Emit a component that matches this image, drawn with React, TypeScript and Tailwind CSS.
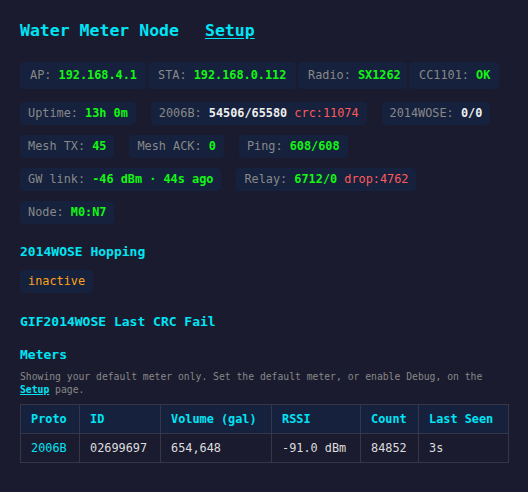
import React from "react";

type Part = { t: string; c?: "g" | "w" | "r"; b?: boolean };
type Stat = { label: string; parts: Part[]; w?: string };

// top row chips are a little wider and sit almost touching
const TOP: Stat[] = [
  { label: "AP:", w: "w-[126px]", parts: [{ t: "192.168.4.1", c: "g", b: true }] },
  { label: "STA:", w: "w-[148px]", parts: [{ t: "192.168.0.112", c: "g", b: true }] },
  { label: "Radio:", w: "w-[109px]", parts: [{ t: "SX1262", c: "g", b: true }] },
  { label: "CC1101:", w: "w-[90px]", parts: [{ t: "OK", c: "g", b: true }] },
];

const ROWS: Stat[][] = [
  [
    { label: "Uptime:", parts: [{ t: "13h 0m", c: "g", b: true }] },
    { label: "2006B:", parts: [{ t: "54506/65580", c: "w", b: true }, { t: " crc:11074", c: "r" }] },
    { label: "2014WOSE:", parts: [{ t: "0/0", c: "w", b: true }] },
  ],
  [
    { label: "Mesh TX:", parts: [{ t: "45", c: "g", b: true }] },
    { label: "Mesh ACK:", parts: [{ t: "0", c: "g", b: true }] },
    { label: "Ping:", parts: [{ t: "608/608", c: "g", b: true }] },
  ],
  [
    { label: "GW link:", parts: [{ t: "-46 dBm · 44s ago", c: "g", b: true }] },
    { label: "Relay:", parts: [{ t: "6712/0", c: "g", b: true }, { t: " drop:4762", c: "r" }] },
  ],
  [{ label: "Node:", parts: [{ t: "M0:N7", c: "g", b: true }] }],
];

const COLS = [
  { name: "Proto", w: "w-[59px]" },
  { name: "ID", w: "w-[81px]" },
  { name: "Volume (gal)", w: "w-[111px]" },
  { name: "RSSI", w: "w-[89px]" },
  { name: "Count", w: "w-[58px]" },
  { name: "Last Seen", w: "w-[90px]" },
];

const METER = ["2006B", "02699697", "654,648", "-91.0 dBm", "84852", "3s"];

const COLOR = { g: "text-[#14f514]", w: "text-[#eeeeee]", r: "text-[#ff5a5a]" };

function Value({ parts }: { parts: Part[] }) {
  return (
    <>
      {parts.map((p, i) => (
        <span key={i} className={`${COLOR[p.c ?? "w"]} ${p.b ? "font-bold" : ""} whitespace-pre`}>
          {p.t}
        </span>
      ))}
    </>
  );
}

export default function App() {
  return (
    <div className="min-h-screen bg-[#1a1b2e] px-5 pt-5 pb-6 font-['DejaVu_Sans_Mono',monospace] text-[11.85px] text-[#888]">
      <h1 className="flex gap-[26px] text-[16.5px] font-bold leading-[21px] text-[#00e5f5]">
        <span>Water Meter Node</span>
        <a className="underline underline-offset-2">Setup</a>
      </h1>

      {/* status chips */}
      <div className="mt-[21px] flex gap-[2px]">
        {TOP.map((s) => (
          <div key={s.label} className={`${s.w} flex h-[27px] shrink-0 items-center rounded bg-[#15213d] px-[10px] whitespace-pre`}>
            <span className="text-[#888]">{s.label} </span>
            <Value parts={s.parts} />
          </div>
        ))}
      </div>

      <div className="mt-[13px] flex flex-col gap-[10px]">
        {ROWS.map((row, i) => (
          <div key={i} className="flex gap-[15px]">
            {row.map((s) => (
              <div key={s.label} className="flex h-[23px] items-center rounded bg-[#15213d] px-2 whitespace-pre">
                <span className="text-[#888]">{s.label} </span>
                <Value parts={s.parts} />
              </div>
            ))}
          </div>
        ))}
      </div>

      <h2 className="mt-[20px] text-[13px] font-bold leading-4 text-[#00e5f5]">2014WOSE Hopping</h2>
      <div className="mt-[10px] flex">
        <div className="flex h-[23px] items-center rounded bg-[#15213d] px-2 text-[#ffa31a]">inactive</div>
      </div>

      <h2 className="mt-[21px] text-[13px] font-bold leading-4 text-[#00e5f5]">GIF2014WOSE Last CRC Fail</h2>

      <h2 className="mt-[17px] text-[13px] font-bold leading-4 text-[#00e5f5]">Meters</h2>
      <p className="mt-[7px] text-[9.73px] leading-[13px] text-[#888]">
        Showing your default meter only. Set the default meter, or enable Debug, on the{" "}
        <a className="font-bold text-[#00e5f5] underline">Setup</a> page.
      </p>

      <table className="mt-[8px] w-full table-fixed border-collapse">
        <thead>
          <tr className="bg-[#15213d]">
            {COLS.map((c) => (
              <th
                key={c.name}
                className={`${c.w} border border-[#363646] px-[10px] py-[6px] text-left font-bold leading-4 text-[#00e5f5]`}
              >
                {c.name}
              </th>
            ))}
          </tr>
        </thead>
        <tbody>
          <tr>
            {METER.map((v, i) => (
              <td
                key={i}
                className={`border border-[#363646] px-[10px] py-[6px] leading-4 ${i === 0 ? "text-[#00e5f5]" : "text-[#dddddd]"}`}
              >
                {v}
              </td>
            ))}
          </tr>
        </tbody>
      </table>
    </div>
  );
}
